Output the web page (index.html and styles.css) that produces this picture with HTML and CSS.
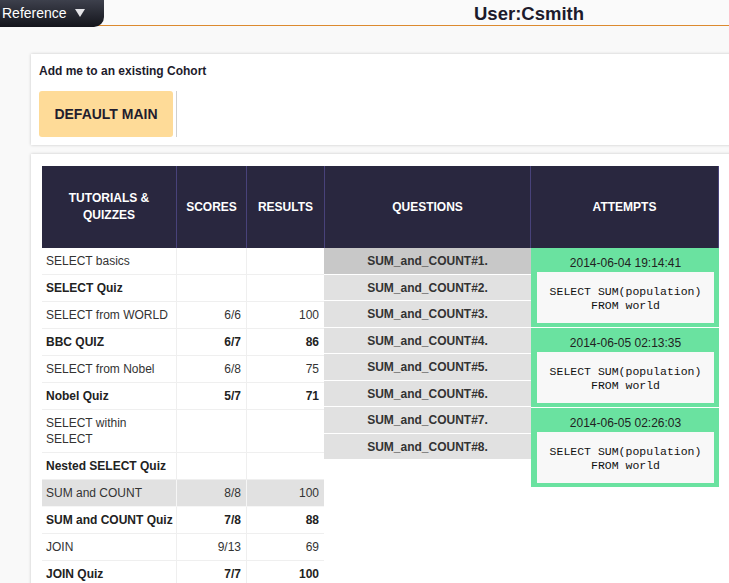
FILE: index.html
```html
<!DOCTYPE html>
<html lang="en">
<head>
<meta charset="utf-8">
<title>User:Csmith</title>
<link rel="stylesheet" href="styles.css">
</head>
<body>
<header class="topbar">
  <div class="ref-tab">Reference<span class="caret"></span></div>
  <h1 class="user">User:Csmith</h1>
</header>
<main class="page">
  <section class="card cohort">
    <p class="cohort-title">Add me to an existing Cohort</p>
    <div class="cohort-list">
      <button class="cohort-btn">DEFAULT MAIN</button>
      <span class="sep"></span>
    </div>
  </section>
  <section class="card progress">
    <div class="board">
      <table class="tut">
        <colgroup><col class="c1"><col class="c2"><col class="c3"></colgroup>
        <thead>
          <tr><th>TUTORIALS &amp;<br>QUIZZES</th><th>SCORES</th><th class="last">RESULTS</th></tr>
        </thead>
        <tbody>
          <tr><td>SELECT basics</td><td class="num"></td><td class="num"></td></tr>
          <tr class="quiz"><td>SELECT Quiz</td><td class="num"></td><td class="num"></td></tr>
          <tr><td>SELECT from WORLD</td><td class="num">6/6</td><td class="num">100</td></tr>
          <tr class="quiz"><td>BBC QUIZ</td><td class="num">6/7</td><td class="num">86</td></tr>
          <tr><td>SELECT from Nobel</td><td class="num">6/8</td><td class="num">75</td></tr>
          <tr class="quiz"><td>Nobel Quiz</td><td class="num">5/7</td><td class="num">71</td></tr>
          <tr><td>SELECT within<br>SELECT</td><td class="num"></td><td class="num"></td></tr>
          <tr class="quiz"><td>Nested SELECT Quiz</td><td class="num"></td><td class="num"></td></tr>
          <tr class="active"><td>SUM and COUNT</td><td class="num">8/8</td><td class="num">100</td></tr>
          <tr class="quiz"><td>SUM and COUNT Quiz</td><td class="num">7/8</td><td class="num">88</td></tr>
          <tr><td>JOIN</td><td class="num">9/13</td><td class="num">69</td></tr>
          <tr class="quiz"><td>JOIN Quiz</td><td class="num">7/7</td><td class="num">100</td></tr>
        </tbody>
      </table>
      <div class="questions">
        <div class="col-head q-head">QUESTIONS</div>
        <div class="q-row current">SUM_and_COUNT#1.</div>
        <div class="q-row">SUM_and_COUNT#2.</div>
        <div class="q-row">SUM_and_COUNT#3.</div>
        <div class="q-row">SUM_and_COUNT#4.</div>
        <div class="q-row">SUM_and_COUNT#5.</div>
        <div class="q-row">SUM_and_COUNT#6.</div>
        <div class="q-row">SUM_and_COUNT#7.</div>
        <div class="q-row">SUM_and_COUNT#8.</div>
      </div>
      <div class="attempts">
        <div class="col-head a-head">ATTEMPTS</div>
        <div class="attempt">
          <div class="when">2014-06-04 19:14:41</div>
          <pre class="code">SELECT SUM(population)
FROM world</pre>
        </div>
        <div class="attempt">
          <div class="when">2014-06-05 02:13:35</div>
          <pre class="code">SELECT SUM(population)
FROM world</pre>
        </div>
        <div class="attempt">
          <div class="when">2014-06-05 02:26:03</div>
          <pre class="code">SELECT SUM(population)
FROM world</pre>
        </div>
      </div>
    </div>
  </section>
</main>
</body>
</html>
```
FILE: styles.css
```css
* { box-sizing: border-box; }
html, body { overflow: hidden; }
body {
  margin: 0;
  background: #f9f9f9;
  font-family: "Liberation Sans", Arial, Helvetica, sans-serif;
  color: #333;
}

.topbar {
  display: flex;
  align-items: flex-start;
  height: 26px;
  border-bottom: 1px solid #dc8a2f;
  background: #fafafa;
}
.ref-tab {
  flex: none;
  width: 104px;
  height: 27px;
  padding: 0 0 2px 2px;
  background: linear-gradient(#3d404c, #14151c);
  color: #fff;
  font-size: 14px;
  line-height: 18px;
  border-bottom-right-radius: 10px;
  display: flex;
  align-items: center;
}
.caret {
  display: inline-block;
  margin-left: 8px;
  margin-top: 1px;
  border-left: 5px solid transparent;
  border-right: 5px solid transparent;
  border-top: 8px solid #e4e4e8;
}
.user {
  margin: 0 0 0 370px;
  font-size: 18.5px;
  font-weight: bold;
  line-height: 28px;
  color: #1d1b2c;
}

.page { padding: 28px 0 0 31px; }
.card {
  background: #fff;
  width: 720px;
  box-shadow: 0 0 3px rgba(0, 0, 0, 0.2);
}
.cohort {
  padding: 9px 8px 8px;
  margin-bottom: 9px;
}
.cohort-title {
  margin: 0 0 12px;
  font-size: 12px;
  font-weight: bold;
  line-height: 16px;
  color: #1d1b2c;
}
.cohort-list { display: flex; gap: 3px; }
.cohort-btn {
  width: 134px;
  height: 46px;
  padding: 0;
  border: 0;
  border-radius: 3px;
  background: #fedb98;
  font: bold 14px "Liberation Sans", Arial, sans-serif;
  color: #1f1d2e;
}
.sep { width: 1px; background: #cfcfcf; }

.progress { padding: 12px 11px 40px; }
.board { display: flex; align-items: flex-start; }

.tut {
  width: 282px;
  table-layout: fixed;
  border-collapse: separate;
  border-spacing: 0;
  font-size: 12px;
  line-height: 16px;
}
.tut .c1 { width: 135px; }
.tut .c2 { width: 70px; }
.tut .c3 { width: 77px; }
.tut th {
  height: 82px;
  padding: 0 6px;
  background: #29273f;
  color: #fff;
  font-weight: bold;
  font-size: 12px;
  line-height: 17px;
  border-right: 1px solid #48427a;
}
.tut th.last { border-right: 0; }
.tut td {
  padding: 5px 5px 5px 4px;
  border-right: 1px solid #efefef;
  border-bottom: 1px solid #efefef;
  color: #333;
  vertical-align: middle;
}
.tut td:first-child { padding-right: 2px; }
.tut td:last-child { border-right: 0; }
.tut td.num { text-align: right; }
.tut tr.quiz td { font-weight: bold; color: #222; white-space: nowrap; }
.tut tr.active td { background: #e1e1e1; border-color: #f6f6f6; }

.col-head {
  height: 82px;
  display: flex;
  align-items: center;
  justify-content: center;
  background: #29273f;
  color: #fff;
  font-weight: bold;
  font-size: 12px;
  border-right: 1px solid #48427a;
}
.questions { width: 207px; }
.q-head { border-left: 1px solid #48427a; }
.q-row {
  height: 26.5px;
  padding-top: 1px;
  border-bottom: 1px solid #fff;
  background: #e1e1e1;
  font-size: 12px;
  font-weight: bold;
  line-height: 25px;
  text-align: center;
  color: #333;
}
.q-row.current { background: #c8c8c8; }

.attempts { width: 188px; }
.attempt {
  height: 80px;
  padding: 7px 5px 0 6px;
  background: #6ae2a0;
  border-bottom: 1px solid #fff;
}
.when {
  font-size: 12px;
  line-height: 16px;
  text-align: center;
  color: #222;
}
.code {
  margin: 1px 0 0;
  height: 51px;
  padding: 13px 0 0;
  background: #f8f8f8;
  font-family: "Liberation Mono", "Courier New", monospace;
  font-size: 11.5px;
  line-height: 14px;
  text-align: center;
  color: #111;
}
```
